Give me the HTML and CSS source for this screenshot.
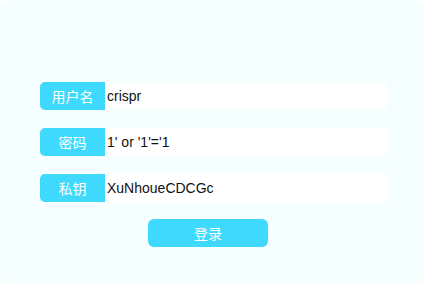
FILE: index.html
```html
<!DOCTYPE html>
<html>
<head>
<meta charset="utf-8">
<link rel="stylesheet" href="styles.css">
</head>
<body>
<div class="card">
  <div class="form">
    <div class="row"><span class="label">用户名</span><span class="input">crispr</span></div>
    <div class="row"><span class="label">密码</span><span class="input">1' or '1'='1</span></div>
    <div class="row"><span class="label">私钥</span><span class="input">XuNhoueCDCGc</span></div>
    <div class="btn-row"><span class="btn">登录</span></div>
  </div>
</div>
</body>
</html>
```
FILE: styles.css
```css
html, body { margin: 0; padding: 0; background: #ffffff; }
.card {
  width: 424px;
  height: 284px;
  background: #f5ffff;
  border-radius: 9px;
  box-sizing: border-box;
  padding-top: 82px;
  padding-left: 40px;
}
.form { display: flex; flex-direction: column; gap: 18px; }
.row { display: flex; height: 28px; width: 347px; }
.label {
  width: 65px;
  background: #3fd9fd;
  color: #ffffff;
  border-radius: 5px 0 0 5px;
  display: flex; align-items: center; justify-content: center;
  font-family: "Noto Sans CJK SC", sans-serif;
  font-size: 14px;
}
.input {
  flex: 1;
  background: #ffffff;
  border-radius: 0 5px 5px 0;
  display: flex; align-items: center;
  padding-left: 2px;
  font-family: "Liberation Sans", Arial, sans-serif;
  font-size: 14px;
  color: #111111;
}
.btn-row { display: flex; margin-top: -1px; padding-left: 108px; }
.btn {
  width: 120px; height: 28px;
  background: #3fd9fd;
  color: #ffffff;
  border-radius: 6px;
  display: flex; align-items: center; justify-content: center;
  font-family: "Noto Sans CJK SC", sans-serif;
  font-size: 14px;
}
```
